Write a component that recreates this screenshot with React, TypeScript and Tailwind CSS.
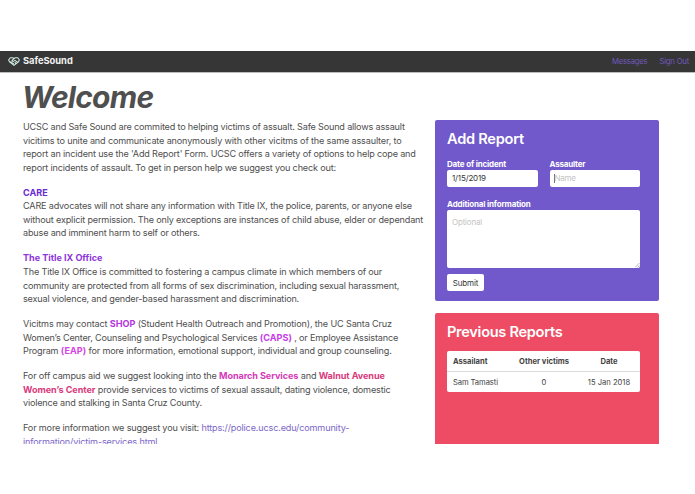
import type { ReactNode } from "react";

function Line({ children, className = "tracking-[-0.17px]" }: { children: ReactNode; className?: string }) {
  return <span className={`block w-max whitespace-nowrap ${className}`}>{children}</span>;
}

function LogoIcon() {
  return (
    <svg className="h-[9px] w-[12px]" viewBox="0 0 24 18" fill="none" stroke="#cfe9e2" strokeWidth="2.2" strokeLinecap="round" strokeLinejoin="round">
      <path d="M12 3.2 9.5 1.5H4.5L1.2 6 3 9.5l9 7.3L21 9.5 22.8 6l-3.3-4.5h-5L12 3.2 8 7l2 2.2 4-2.4 5.5 4" />
      <path d="m5.5 9.5 2.5 1.5M9 12.5l2 1M14 11l2 2" />
    </svg>
  );
}

function AddReport() {
  return (
    <section className="h-[181px] rounded-[2px] bg-[#7259cb] px-3 pt-[9px] text-white">
      <h2 className="w-max text-[14.6px] leading-5 font-semibold tracking-[-0.25px]">Add Report</h2>
      <div className="mt-[10px] flex gap-3">
        <label className="block w-[90.5px] text-[8px] leading-[11px] font-bold">
          <span className="block w-max tracking-[-0.16px]">Date of incident</span>
          <span className="flex h-[17px] items-center rounded-[2px] bg-white px-[5px] font-normal tracking-[-0.15px] text-[#363636]">1/15/2019</span>
        </label>
        <label className="block w-[90.5px] text-[8px] leading-[11px] font-bold">
          <span className="block w-max tracking-[-0.2px]">Assaulter</span>
          <span className="flex h-[17px] items-center rounded-[2px] bg-white px-[4px] font-normal text-[#c4c4c4]">
            <span className="h-[9px] w-px bg-[#777]" />
            <span className="tracking-[-0.25px]">Name</span>
          </span>
        </label>
      </div>
      <div className="mt-[12px] text-[8px] leading-[11px] font-bold">
        <span className="block w-max tracking-[-0.16px]">Additional information</span>
        <div className="flex h-[58px] w-[193px] justify-between rounded-[2px] bg-white pt-[7px] pl-[5px] font-normal tracking-[-0.18px] text-[#c4c4c4]">
          Optional
          <svg className="h-[5px] w-[5px] self-end" viewBox="0 0 5 5" stroke="#888" strokeWidth=".6">
            <path d="M0 4.5 4.5 0M2.5 4.5l2-2" />
          </svg>
        </div>
      </div>
      <button className="mt-[6px] flex h-[17px] w-[37px] items-center justify-center rounded-[2px] bg-white text-[8px] tracking-[-0.15px] text-[#363636]">Submit</button>
    </section>
  );
}

function PreviousReports() {
  return (
    <section className="h-[132px] rounded-t-[2px] bg-[#ed4c64] px-3 pt-[9px]">
      <h2 className="w-max text-[14.6px] leading-5 font-semibold tracking-[-0.3px] text-white">Previous Reports</h2>
      <div className="mt-[9px] w-[193px] rounded-[2px] bg-white text-[7.6px] text-[#424242]">
        <div className="grid h-[21px] grid-cols-[64px_66px_64px] items-center border-b border-[#dbdbdb] pt-[2px] font-bold">
          <span className="pl-[6px]">Assailant</span>
          <span className="text-center">Other victims</span>
          <span className="text-center">Date</span>
        </div>
        <div className="grid h-[20px] grid-cols-[64px_66px_64px] items-center pt-px">
          <span className="pl-[6px] tracking-[-0.08px]">Sam Tamasti</span>
          <span className="text-center">0</span>
          <span className="text-center">15 Jan 2018</span>
        </div>
      </div>
    </section>
  );
}

export default function App() {
  return (
    <div className="h-[494px] w-[695px] overflow-hidden bg-white pt-[51px] font-['Inter',sans-serif] text-[#4f4f4f]">
      <div className="h-[393px] overflow-hidden">
        <nav className="flex h-[22px] items-center border-b border-[#bdbdbd] bg-[#363636] pr-[6px] pb-px pl-[8px] text-[7.7px] tracking-[-0.2px]">
          <LogoIcon />
          <span className="ml-[3px] text-[9.3px] font-bold tracking-[0px] text-[#f2f2f2]">SafeSound</span>
          <span className="ml-auto pt-[2px] text-[#705abb]">Messages</span>
          <span className="ml-[12px] pt-[2px] text-[#705abb]">Sign Out</span>
        </nav>
        <div className="flex">
          <main className="w-[412px] shrink-0 pl-[23px] text-[9.1px] leading-[13.6px]">
            <h1 className="mt-[6px] -ml-px w-max text-[30px] leading-[36px] font-bold tracking-[-0.75px] italic">Welcome</h1>
            <div className="mt-[5px] flex flex-col gap-[11.3px]">
              <p>
                <Line className="tracking-[-0.18px]">UCSC and Safe Sound are commited to helping victims of assualt. Safe Sound allows assault</Line>
                <Line className="tracking-[-0.16px]">vicitims to unite and communicate anonymously with other vicitms of the same assaulter, to</Line>
                <Line className="tracking-[-0.175px]">report an incident use the 'Add Report' Form. UCSC offers a variety of options to help cope and</Line>
                <Line>report incidents of assault. To get in person help we suggest you check out:</Line>
              </p>
              <p>
                <Line className="font-bold text-[#6a2bd0]">CARE</Line>
                <Line className="tracking-[-0.175px]">CARE advocates will not share any information with Title IX, the police, parents, or anyone else</Line>
                <Line>without explicit permission. The only exceptions are instances of child abuse, elder or dependant</Line>
                <Line className="tracking-[-0.18px]">abuse and imminent harm to self or others.</Line>
              </p>
              <p>
                <Line className="font-bold tracking-[-0.02px] text-[#8f35dc]">The Title IX Office</Line>
                <Line>The Title IX Office is committed to fostering a campus climate in which members of our</Line>
                <Line className="tracking-[-0.17px]">community are protected from all forms of sex discrimination, including sexual harassment,</Line>
                <Line className="tracking-[-0.18px]">sexual violence, and gender-based harassment and discrimination.</Line>
              </p>
              <p>
                <Line className="tracking-[-0.145px]">Vicitms may contact <b className="tracking-[-0.04px] text-[#b536df]">SHOP</b> (Student Health Outreach and Promotion), the UC Santa Cruz</Line>
                <Line className="tracking-[-0.18px]">Women’s Center, Counseling and Psychological Services <b className="tracking-[0.03px] text-[#c53ce6]">(CAPS)</b> , or Employee Assistance</Line>
                <Line className="tracking-[-0.17px]">Program <b className="tracking-[0.03px] text-[#d545e3]">(EAP)</b> for more information, emotional support, individual and group counseling.</Line>
              </p>
              <p>
                <Line className="tracking-[-0.16px]">For off campus aid we suggest looking into the <b className="tracking-[-0.08px] text-[#d33bb8]">Monarch Services</b> and <b className="tracking-[-0.07px] text-[#d93a7c]">Walnut Avenue</b></Line>
                <Line className="tracking-[-0.17px]"><b className="tracking-[-0.06px] text-[#d93a7c]">Women’s Center</b> provide services to victims of sexual assault, dating violence, domestic</Line>
                <Line className="tracking-[-0.18px]">violence and stalking in Santa Cruz County.</Line>
              </p>
              <p>
                <Line className="tracking-[-0.158px]">For more information we suggest you visit: <a className="text-[#7d68c8]">https://police.ucsc.edu/community-</a></Line>
                <Line className="tracking-[-0.156px] text-[#7d68c8]">information/victim-services.html</Line>
              </p>
            </div>
          </main>
          <aside className="ml-[23px] w-[224px] shrink-0 pt-[47px]">
            <AddReport />
            <div className="mt-[12px]">
              <PreviousReports />
            </div>
          </aside>
        </div>
      </div>
    </div>
  );
}
